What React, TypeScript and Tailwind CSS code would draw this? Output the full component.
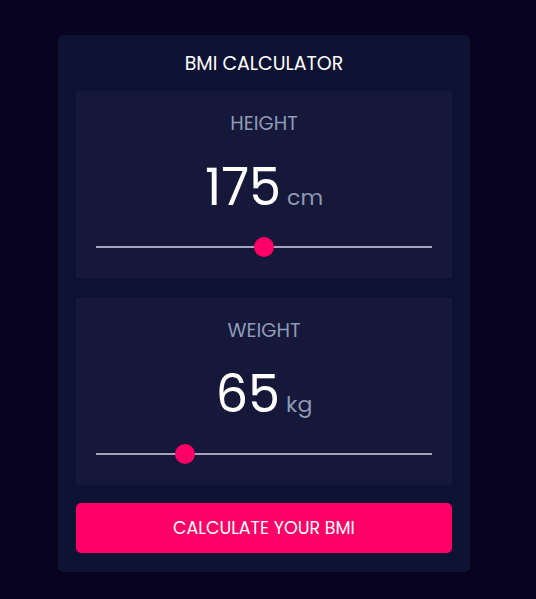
import { useState } from "react";

type SliderProps = {
  label: string;
  unit: string;
  value: number;
  min: number;
  max: number;
  onChange: (v: number) => void;
};

function MeasureCard({ label, unit, value, min, max, onChange }: SliderProps) {
  const frac = (value - min) / (max - min);

  return (
    <div className="bg-[#151839] h-[187px] px-5 pt-[21px] flex flex-col items-center">
      <div className="text-[19.5px] leading-6 text-[#8e9ab6]">{label}</div>
      <div className="mt-[25px] flex items-baseline gap-[6px] h-[52px]">
        <span className="text-[51px] leading-[52px] text-white">{value}</span>
        <span className="text-[22px] text-[#8e9ab6]">{unit}</span>
      </div>
      <div className="relative w-full h-5 mt-[24px]">
        <div className="absolute left-0 right-0 top-[9px] h-[2px] bg-[#a3a6b9]" />
        <div
          className="absolute top-0 w-5 h-5 rounded-full bg-[#ff0066] cursor-pointer"
          style={{ left: `${frac * (336 - 20)}px` }}
        />
        <input
          type="range"
          min={min}
          max={max}
          value={value}
          onChange={(e) => onChange(Number(e.target.value))}
          className="absolute inset-0 w-full opacity-0 cursor-pointer"
        />
      </div>
    </div>
  );
}

export default function App() {
  const [height, setHeight] = useState(175);
  const [weight, setWeight] = useState(65);

  return (
    <div
      className="min-h-[599px] w-full bg-[#07021f] pt-[35px]"
      style={{ fontFamily: '"Poppins", "Noto Sans", "Open Sans", sans-serif' }}
    >
      <div className="ml-[58px] w-[412px] rounded-[5px] bg-[#0d1132] px-[18px] pb-[19px]">
        <h1 className="h-[56px] flex items-center justify-center pt-[2px] text-[19px] text-white">
          BMI CALCULATOR
        </h1>
        <div className="flex flex-col gap-5">
          <MeasureCard label="HEIGHT" unit="cm" value={height} min={100} max={250} onChange={setHeight} />
          <MeasureCard label="WEIGHT" unit="kg" value={weight} min={40} max={140} onChange={setWeight} />
        </div>
        <button className="mt-[18px] w-full h-[50px] rounded-[5px] bg-[#ff0066] text-white text-[17.5px]">
          CALCULATE YOUR BMI
        </button>
      </div>
    </div>
  );
}
